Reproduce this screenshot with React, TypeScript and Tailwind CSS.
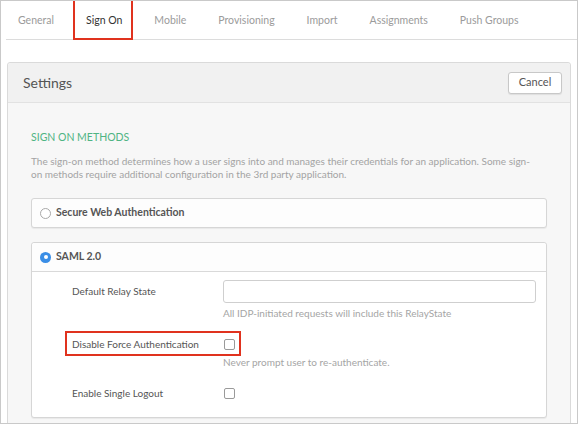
import React from "react";

const tabs = ["General", "Sign On", "Mobile", "Provisioning", "Import", "Assignments", "Push Groups"];

function Checkbox() {
  return <span className="block w-[11px] h-[11px] rounded-[2px] border border-[#9a9a9a] bg-white" />;
}

export default function App() {
  return (
    <div
      className="w-[578px] h-[424px] overflow-hidden border border-[#c9c9c9] bg-white text-[#555]"
      style={{ fontFamily: "Lato, 'Liberation Sans', sans-serif" }}
    >
      {/* Tabs */}
      <div className="ml-[5px] h-[39px] border-b border-[#dcdcdc] flex items-center pl-[12px] gap-[32px] text-[10.5px] leading-[16px] text-[#9b9b9b]">
        {tabs.map((t) => (
          <span key={t} className={t === "Sign On" ? "relative text-[#333]" : ""}>
            {t}
            {t === "Sign On" && (
              <span className="absolute left-[-13px] right-[-11px] top-[-16px] bottom-[-12px] border-2 border-[#e0321e]" />
            )}
          </span>
        ))}
      </div>

      {/* Settings panel */}
      <div className="mt-[22px] ml-[6px] mr-[6px] border border-[#dadada] rounded-[3px] bg-[#f7f7f7] h-[400px]">
        <div className="h-[40px] bg-[#f1f1f1] border-b border-[#e2e2e2] rounded-t-[3px] flex items-center justify-between pl-[15px] pr-[8px]">
          <span className="text-[14px] text-[#555]">Settings</span>
          <button className="w-[54px] h-[22px] rounded-[3px] border border-[#c8c8c8] bg-white text-[11px] text-[#555] shadow-[0_1px_1px_rgba(0,0,0,0.08)]">
            Cancel
          </button>
        </div>

        <div className="pt-[27px] pl-[23px] pr-[23px]">
          <div className="text-[10.5px] leading-[14px] text-[#4fb483]">SIGN ON METHODS</div>
          <div className="mt-[11px] text-[10px] leading-[13px] text-[#a3a3a3] whitespace-nowrap">
            The sign-on method determines how a user signs into and manages their credentials for an application. Some sign-
            <br />
            on methods require additional configuration in the 3rd party application.
          </div>

          {/* Secure Web Authentication */}
          <div className="mt-[17px] h-[30px] rounded-[3px] border border-[#d6d6d6] bg-[#fdfdfd] shadow-[0_1px_1px_rgba(0,0,0,0.06)] flex items-center pl-[8px] gap-[5px]">
            <span className="block w-[11px] h-[11px] rounded-full border border-[#a8a8a8] bg-white" />
            <span className="text-[10.5px] font-bold text-[#555]">Secure Web Authentication</span>
          </div>

          {/* SAML 2.0 */}
          <div className="mt-[14px] rounded-[3px] border border-[#d6d6d6] bg-white shadow-[0_1px_1px_rgba(0,0,0,0.06)]">
            <div className="h-[29px] bg-[#fdfdfd] border-b border-[#d9d9d9] rounded-t-[3px] flex items-center pl-[8px] gap-[5px]">
              <span className="flex items-center justify-center w-[11px] h-[11px] rounded-full bg-[#3a8ee6]">
                <span className="block w-[4px] h-[4px] rounded-full bg-white" />
              </span>
              <span className="text-[10.5px] font-bold text-[#555]">SAML 2.0</span>
            </div>

            <div className="pt-[8px] pb-[12px] pl-[40px] pr-[10px] text-[10px] text-[#555]">
              {/* Default Relay State */}
              <div className="flex items-center h-[23px]">
                <span className="w-[151px]">Default Relay State</span>
                <div className="flex-1 h-[23px] rounded-[3px] border border-[#cfcfcf] bg-white" />
              </div>
              <div className="mt-[4px] ml-[151px] leading-[13px] text-[#a5a5a5]">
                All IDP-initiated requests will include this RelayState
              </div>

              {/* Disable Force Authentication */}
              <div className="relative mt-[12px] flex items-center h-[24px]">
                <span className="w-[152px]">Disable Force Authentication</span>
                <Checkbox />
                <span className="absolute left-[-7px] w-[176px] top-[-1px] bottom-[0px] border-2 border-[#e0321e]" />
              </div>
              <div className="mt-[0px] ml-[151px] leading-[13px] text-[#a5a5a5]">
                Never prompt user to re-authenticate.
              </div>

              {/* Enable Single Logout */}
              <div className="mt-[12px] flex items-center h-[24px]">
                <span className="w-[152px]">Enable Single Logout</span>
                <Checkbox />
              </div>
            </div>
          </div>
        </div>
      </div>
    </div>
  );
}
